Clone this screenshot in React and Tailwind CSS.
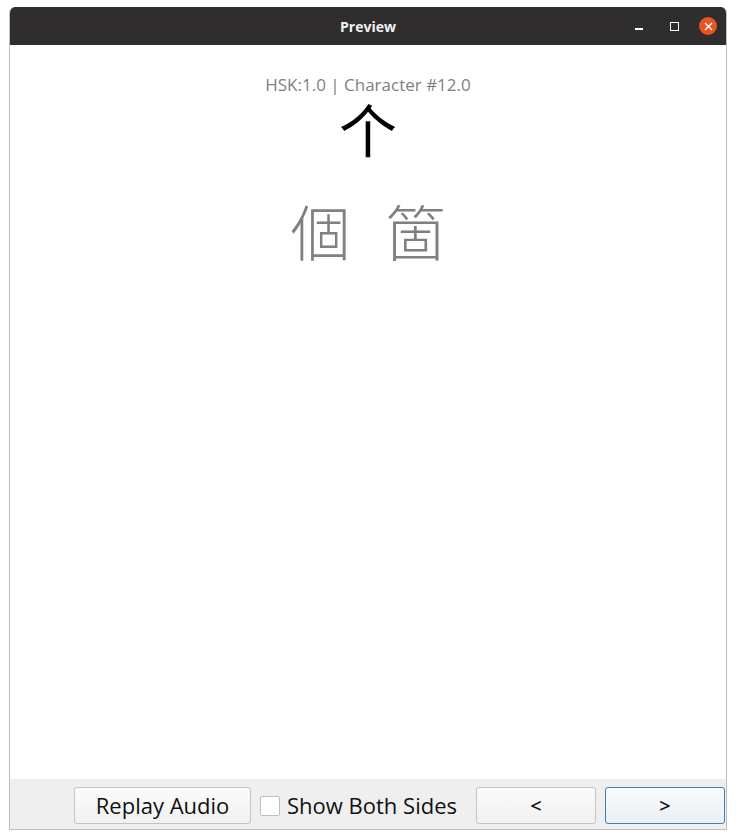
import React from "react";

const ui = { fontFamily: '"Open Sans", "Noto Sans", sans-serif' };
const cjk = { fontFamily: '"Noto Sans CJK TC", "Noto Sans CJK SC", sans-serif' };

const App = () => {
  return (
    <div className="h-[835px] w-[736px] bg-white pt-[7px] px-[9px] pb-[5px]" style={ui}>
      <div className="flex h-full flex-col overflow-hidden rounded-t-[6px] border-x border-b border-[#bdbdbd]">
        {/* Title bar */}
        <div className="relative flex h-[38px] shrink-0 items-center justify-center bg-[#2f2d2e]">
          <span className="text-[14px] font-bold text-[#f2f2f2]">Preview</span>
          <div className="absolute right-[9px] top-0 flex h-full items-center">
            <div className="mt-[6px] h-[1.5px] w-[8px] bg-white"></div>
            <div className="ml-[27px] h-[9px] w-[9px] border border-white"></div>
            <div className="ml-[20px] flex h-[18px] w-[18px] items-center justify-center rounded-full bg-[#e95420]">
              <svg width="9" height="9" viewBox="0 0 9 9">
                <path d="M1 1L8 8M8 1L1 8" stroke="white" strokeWidth="1.4" />
              </svg>
            </div>
          </div>
        </div>

        {/* Card content */}
        <div className="flex flex-1 flex-col items-center bg-white pt-[29px]">
          <div className="text-[17px] leading-[22px] text-[#7f7f7f]">HSK:1.0 | Character #12.0</div>
          <div className="text-[58px] leading-[64px] text-black" style={cjk}>个</div>
          <div className="mt-[34px] flex gap-[35px] text-[60px] font-light leading-[72px] text-[#808080]" style={cjk}>
            <span>個</span>
            <span>箇</span>
          </div>
        </div>

        {/* Bottom bar */}
        <div className="flex h-[50px] shrink-0 items-center justify-end bg-[#efefef] pr-px pt-[3px]">
          <button className="h-[37px] w-[177px] rounded-[3px] border border-[#c4c4c4] bg-gradient-to-b from-[#fbfbfb] to-[#f1f1f1] text-[22px] text-[#111]">
            Replay Audio
          </button>
          <label className="ml-[9px] flex items-center gap-[7px]">
            <span className="h-[20px] w-[20px] rounded-[2px] border border-[#bfbfbf] bg-white"></span>
            <span className="text-[22px] text-[#111]">Show Both Sides</span>
          </label>
          <button className="ml-[19px] h-[37px] w-[120px] rounded-[3px] border border-[#c4c4c4] bg-gradient-to-b from-[#fbfbfb] to-[#f1f1f1] text-[20px] font-semibold text-[#111]">
            &lt;
          </button>
          <button className="ml-[9px] h-[37px] w-[120px] rounded-[3px] border border-[#3f7fb8] bg-gradient-to-b from-[#f9fbfd] to-[#eaf0f5] text-[20px] font-semibold text-[#111]">
            &gt;
          </button>
        </div>
      </div>
    </div>
  );
};

export default App;
